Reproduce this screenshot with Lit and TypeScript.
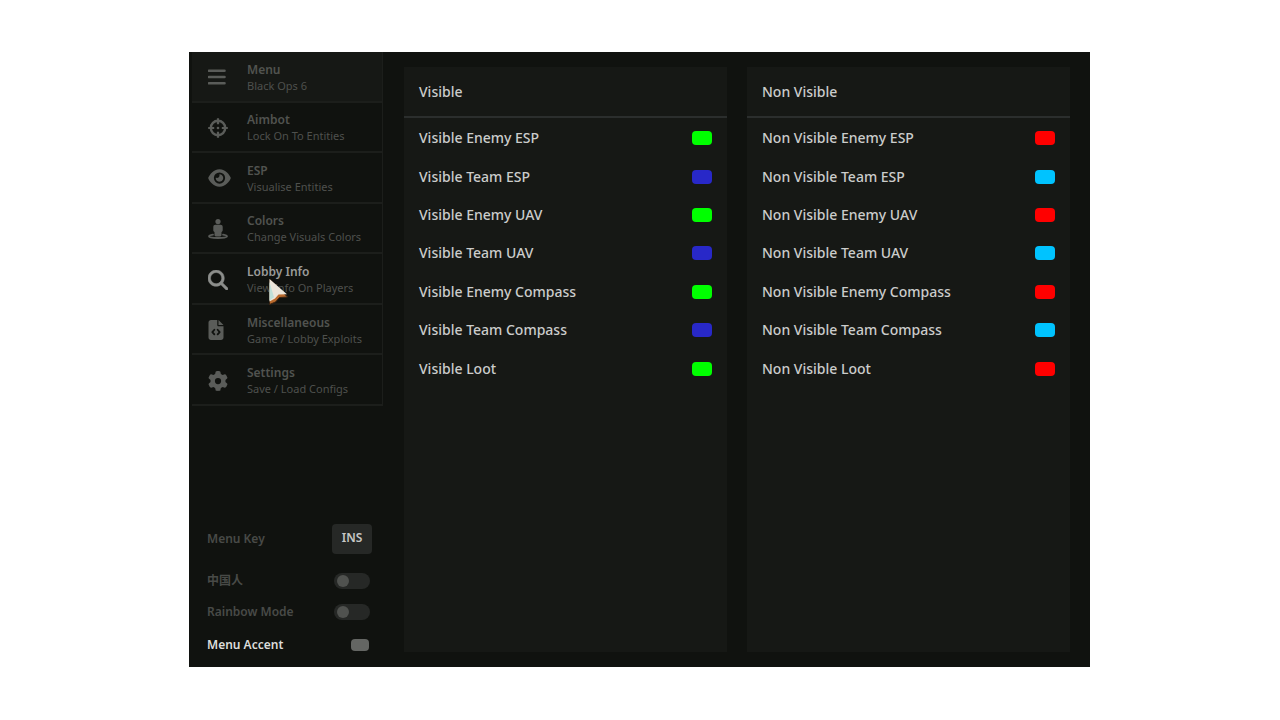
import { LitElement, html, css, svg, TemplateResult } from "lit";
import { customElement, property } from "lit/decorators.js";

interface NavItem {
  title: string;
  sub: string;
  icon: TemplateResult;
  state?: string;
}

const icon = (viewBox: string, body: TemplateResult, cls = "icon") =>
  html`<svg class=${cls} viewBox=${viewBox} aria-hidden="true">${body}</svg>`;

const NAV: NavItem[] = [
  {
    title: "Menu",
    sub: "Black Ops 6",
    state: "current",
    icon: icon(
      "0 0 20 20",
      svg`<path d="M1 3.700h15.500M1 10h15.500M1 16.300h15.500" fill="none" stroke="currentColor" stroke-width="2.600" stroke-linecap="round"/>`
    ),
  },
  {
    title: "Aimbot",
    sub: "Lock On To Entities",
    icon: icon(
      "0 0 20 20",
      svg`<circle cx="10" cy="10" r="7.2" fill="none" stroke="currentColor" stroke-width="2.4"/>
        <path d="M10 .2v6M10 13.8v6M.2 10h6M13.8 10h6" stroke="currentColor" stroke-width="2.2"/>
        <circle cx="10" cy="10" r="1.3" fill="currentColor"/>`
    ),
  },
  {
    title: "ESP",
    sub: "Visualise Entities",
    icon: icon(
      "0 0 576 512",
      svg`<path fill="currentColor" d="M288 32c-80.800 0-145.500 36.800-192.600 80.600C48.600 156 17.300 208 2.500 243.700c-3.300 7.900-3.300 16.700 0 24.600C17.300 304 48.600 356 95.400 399.400C142.500 443.200 207.200 480 288 480s145.500-36.800 192.600-80.600c46.800-43.500 78.100-95.400 93-131.100c3.300-7.900 3.300-16.700 0-24.600c-14.900-35.700-46.200-87.700-93-131.100C433.500 68.800 368.800 32 288 32zM144 256a144 144 0 1 1 288 0 144 144 0 1 1-288 0zm144-64c0 35.300-28.700 64-64 64c-7.100 0-13.900-1.200-20.300-3.300c-5.500-1.800-11.900 1.600-11.700 7.400c.3 6.900 1.300 13.800 3.200 20.700c13.700 51.200 66.400 81.600 117.600 67.900s81.600-66.400 67.900-117.600c-11.100-41.500-47.800-69.400-88.600-71.100c-5.800-.2-9.200 6.100-7.400 11.700c2.100 6.400 3.300 13.200 3.300 20.300z"/>`,
      "icon eye"
    ),
  },
  {
    title: "Colors",
    sub: "Change Visuals Colors",
    icon: icon(
      "0 0 20 20",
      svg`<circle cx="10" cy="2.600" r="2.600" fill="currentColor"/>
        <path fill="currentColor" d="M7.500 5.800h5c1.300 0 2.200.9 2.200 2.200v3.300c0 .8-.5 1.400-1.200 1.700v3c0 .8-.6 1.400-1.400 1.400H7.900c-.8 0-1.400-.6-1.400-1.400v-3c-.7-.3-1.200-.9-1.200-1.700V8c0-1.300.9-2.200 2.200-2.200z"/>
        <path d="M5 15.600c-2.300.4-4 .9-4 1.700 0 1.100 4 1.700 9 1.700s9-.6 9-1.700c0-.8-1.700-1.300-4-1.700" fill="none" stroke="currentColor" stroke-width="1.800" stroke-linecap="round"/>`
    ),
  },
  {
    title: "Lobby Info",
    sub: "View Info On Players",
    state: "hover",
    icon: icon(
      "0 0 512 512",
      svg`<path fill="currentColor" d="M416 208c0 45.900-14.900 88.300-40 122.700L502.600 457.400c12.500 12.500 12.500 32.800 0 45.300s-32.800 12.500-45.300 0L330.700 376c-34.400 25.200-76.800 40-122.700 40C93.100 416 0 322.900 0 208S93.100 0 208 0S416 93.100 416 208zM208 352a144 144 0 1 0 0-288 144 144 0 1 0 0 288z" stroke="currentColor" stroke-width="14"/>`
    ),
  },
  {
    title: "Miscellaneous",
    sub: "Game / Lobby Exploits",
    icon: icon(
      "0 0 384 512",
      svg`<path fill="currentColor" fill-rule="evenodd" d="M64 0C28.700 0 0 28.700 0 64V448c0 35.300 28.700 64 64 64H320c35.300 0 64-28.700 64-64V160H256c-17.700 0-32-14.300-32-32V0H64zM256 0V128H384L256 0z"/>
        <path d="M150 250l-52 58 52 58M234 250l52 58-52 58" fill="none" stroke="#10120f" stroke-width="46" stroke-linecap="round" stroke-linejoin="round"/>`,
      "icon file"
    ),
  },
  {
    title: "Settings",
    sub: "Save / Load Configs",
    icon: icon(
      "0 0 512 512",
      svg`<path fill="currentColor" d="M495.900 166.600c3.200 8.700 .5 18.400-6.400 24.600l-43.300 39.400c1.100 8.300 1.700 16.800 1.700 25.400s-.6 17.100-1.700 25.400l43.300 39.400c6.900 6.200 9.600 15.900 6.400 24.600c-4.400 11.900-9.700 23.300-15.800 34.300l-4.700 8.100c-6.600 11-14 21.400-22.100 31.200c-5.900 7.200-15.700 9.600-24.500 6.800l-55.700-17.700c-13.400 10.300-28.200 18.900-44 25.400l-12.500 57.100c-2 9.100-9 16.300-18.200 17.800c-13.800 2.300-28 3.500-42.500 3.500s-28.700-1.200-42.500-3.500c-9.200-1.500-16.200-8.700-18.200-17.800l-12.500-57.100c-15.800-6.500-30.600-15.100-44-25.400L83.100 425.900c-8.800 2.800-18.600 .3-24.500-6.800c-8.100-9.800-15.500-20.200-22.100-31.200l-4.700-8.100c-6.100-11-11.400-22.400-15.800-34.300c-3.200-8.700-.5-18.400 6.400-24.600l43.300-39.400C64.600 273.100 64 264.600 64 256s.6-17.100 1.700-25.400L22.400 191.200c-6.900-6.200-9.600-15.900-6.400-24.600c4.400-11.900 9.700-23.300 15.800-34.300l4.700-8.100c6.600-11 14-21.400 22.100-31.200c5.900-7.200 15.700-9.600 24.500-6.800l55.700 17.700c13.400-10.300 28.200-18.900 44-25.400l12.500-57.100c2-9.100 9-16.300 18.200-17.800C227.300 1.200 241.500 0 256 0s28.700 1.200 42.500 3.500c9.200 1.500 16.200 8.700 18.200 17.800l12.500 57.100c15.800 6.500 30.600 15.100 44 25.400l55.700-17.700c8.800-2.800 18.600-.3 24.500 6.800c8.100 9.800 15.500 20.200 22.100 31.200l4.700 8.100c6.100 11 11.400 22.400 15.800 34.300zM256 336a80 80 0 1 0 0-160 80 80 0 1 0 0 160z"/>`
    ),
  },
];

const TARGETS = ["Enemy ESP", "Team ESP", "Enemy UAV", "Team UAV", "Enemy Compass", "Team Compass", "Loot"];

@customElement("color-panel")
class ColorPanel extends LitElement {
  @property() heading = "";
  @property() enemy = "#00ff00";
  @property() team = "#2828c8";

  static styles = css`
    :host {
      display: block;
      background: #161815;
      color: #cbcccb;
      font-size: 14px;
      font-weight: 500;
      line-height: 20px;
    }
    h2 {
      margin: 0;
      padding: 15px 15px 14px;
      border-bottom: 2px solid #2b2e2d;
      font: inherit;
    }
    .list {
      display: grid;
      grid-auto-rows: 1fr;
      height: 269px;
      padding-top: 1px;
    }
    .row {
      display: flex;
      align-items: center;
      justify-content: space-between;
      padding: 0 15px;
    }
    input {
      appearance: none;
      width: 20px;
      height: 14px;
      margin: 0;
      padding: 0;
      border: 0;
      background: none;
    }
    input::-webkit-color-swatch-wrapper {
      padding: 0;
    }
    input::-webkit-color-swatch {
      border: 0;
      border-radius: 4px;
    }
  `;

  render() {
    return html`
      <h2>${this.heading}</h2>
      <div class="list">
        ${TARGETS.map(
          (t) => html`<label class="row">
            <span>${this.heading} ${t}</span>
            <input type="color" .value=${t.startsWith("Team") ? this.team : this.enemy} />
          </label>`
        )}
      </div>
    `;
  }
}

@customElement("app-root")
class AppRoot extends LitElement {
  static styles = css`
    :host {
      display: flex;
      box-sizing: border-box;
      min-height: 100vh;
      padding: 52px 190px 53px 189px;
      background: #fff;
      font-family: "Noto Sans", "Noto Sans CJK SC", sans-serif;
    }
    .window {
      flex: 1;
      display: flex;
      background: #10120f;
    }
    .side {
      width: 194px;
      display: flex;
      flex-direction: column;
      justify-content: space-between;
    }
    nav {
      display: grid;
      grid-auto-rows: 1fr;
      height: 354px;
      margin-left: 3px;
      border-right: 1px solid #1c1e1b;
    }
    .item {
      position: relative;
      display: grid;
      grid-template-columns: 39px 1fr;
      align-items: center;
      padding: 2px 0 0 16px;
      border: 0;
      border-bottom: 2px solid #1c1e1b;
      background: none;
      color: #484a47;
      font-family: inherit;
      text-align: left;
    }
    .current {
      background: #161815;
    }
    .icon {
      width: 20px;
      height: 20px;
      color: #5a5c59;
    }
    .eye {
      width: 23px;
    }
    .file {
      width: 16px;
    }
    .title,
    .sub {
      display: block;
    }
    .title {
      font-size: 12px;
      font-weight: 600;
      line-height: 17px;
      color: #51534f;
    }
    .sub {
      font-size: 11px;
      font-weight: 400;
      line-height: 16px;
      color: #4e504d;
    }
    .hover .title {
      color: #9a9b99;
    }
    .hover .icon {
      color: #8c8e8b;
    }
    .cursor {
      position: absolute;
      left: 76px;
      top: 24px;
      width: 22px;
      height: 28px;
    }
    .options {
      padding: 0 12px 5px 18px;
      color: #484a47;
      font-size: 12px;
      font-weight: 600;
      line-height: 18px;
    }
    .option {
      display: flex;
      align-items: center;
      justify-content: space-between;
      height: 31px;
      padding-right: 1px;
    }
    .key {
      height: 30px;
      padding-right: 0;
      margin-bottom: 11px;
    }
    .accent {
      height: 35px;
      color: #dcdddb;
    }
    .bind {
      width: 40px;
      height: 30px;
      margin-right: -1px;
      padding: 0 0 2px;
      border: 0;
      border-radius: 4px;
      background: #262826;
      color: #c6c7c5;
      font: 600 12px/18px "Noto Sans", sans-serif;
    }
    .toggle {
      appearance: none;
      display: flex;
      align-items: center;
      width: 36px;
      height: 16px;
      margin: 0;
      padding: 0 3px;
      border-radius: 8px;
      background: #262826;
    }
    .toggle::before {
      content: "";
      width: 12px;
      height: 12px;
      border-radius: 50%;
      background: #50524f;
    }
    .toggle:checked {
      justify-content: flex-end;
    }
    .swatch {
      appearance: none;
      width: 18px;
      height: 12px;
      margin: 0 1px 0 0;
      padding: 0;
      border: 0;
      background: none;
    }
    .swatch::-webkit-color-swatch-wrapper {
      padding: 0;
    }
    .swatch::-webkit-color-swatch {
      border: 0;
      border-radius: 4px;
    }
    main {
      flex: 1;
      display: grid;
      grid-template-columns: 1fr 1fr;
      gap: 20px;
      padding: 15px 20px 15px 21px;
    }
  `;

  render() {
    return html`
      <div class="window">
        <div class="side">
          <nav>
            ${NAV.map(
              (n) => html`<button class="item ${n.state ?? ""}">
                ${n.icon}
                <span><span class="title">${n.title}</span><span class="sub">${n.sub}</span></span>
                ${n.state === "hover"
                  ? html`<svg class="cursor" viewBox="0 0 22 28" aria-hidden="true">
                      <path d="M1.500 1v25.500l6-2.500 4-4.500 8-.5z" fill="#b9692c" stroke="#3a2413" stroke-width="1" stroke-linejoin="round" />
                      <path d="M1.500 1v22.500l5.500-3 3.500-4 8.500-.2z" fill="#ece6da" />
                      <path d="M1.500 4v18.500l4.500-3.200z" fill="#bfe0d8" />
                    </svg>`
                  : ""}
              </button>`
            )}
          </nav>
          <div class="options">
            <div class="option key"><span id="key">Menu Key</span><button class="bind" aria-describedby="key">INS</button></div>
            <label class="option"><span>中国人</span><input class="toggle" type="checkbox" /></label>
            <label class="option"><span>Rainbow Mode</span><input class="toggle" type="checkbox" /></label>
            <label class="option accent"><span>Menu Accent</span><input class="swatch" type="color" .value=${"#646663"} /></label>
          </div>
        </div>
        <main>
          <color-panel heading="Visible"></color-panel>
          <color-panel heading="Non Visible" enemy="#ff0000" team="#00c3ff"></color-panel>
        </main>
      </div>
    `;
  }
}
